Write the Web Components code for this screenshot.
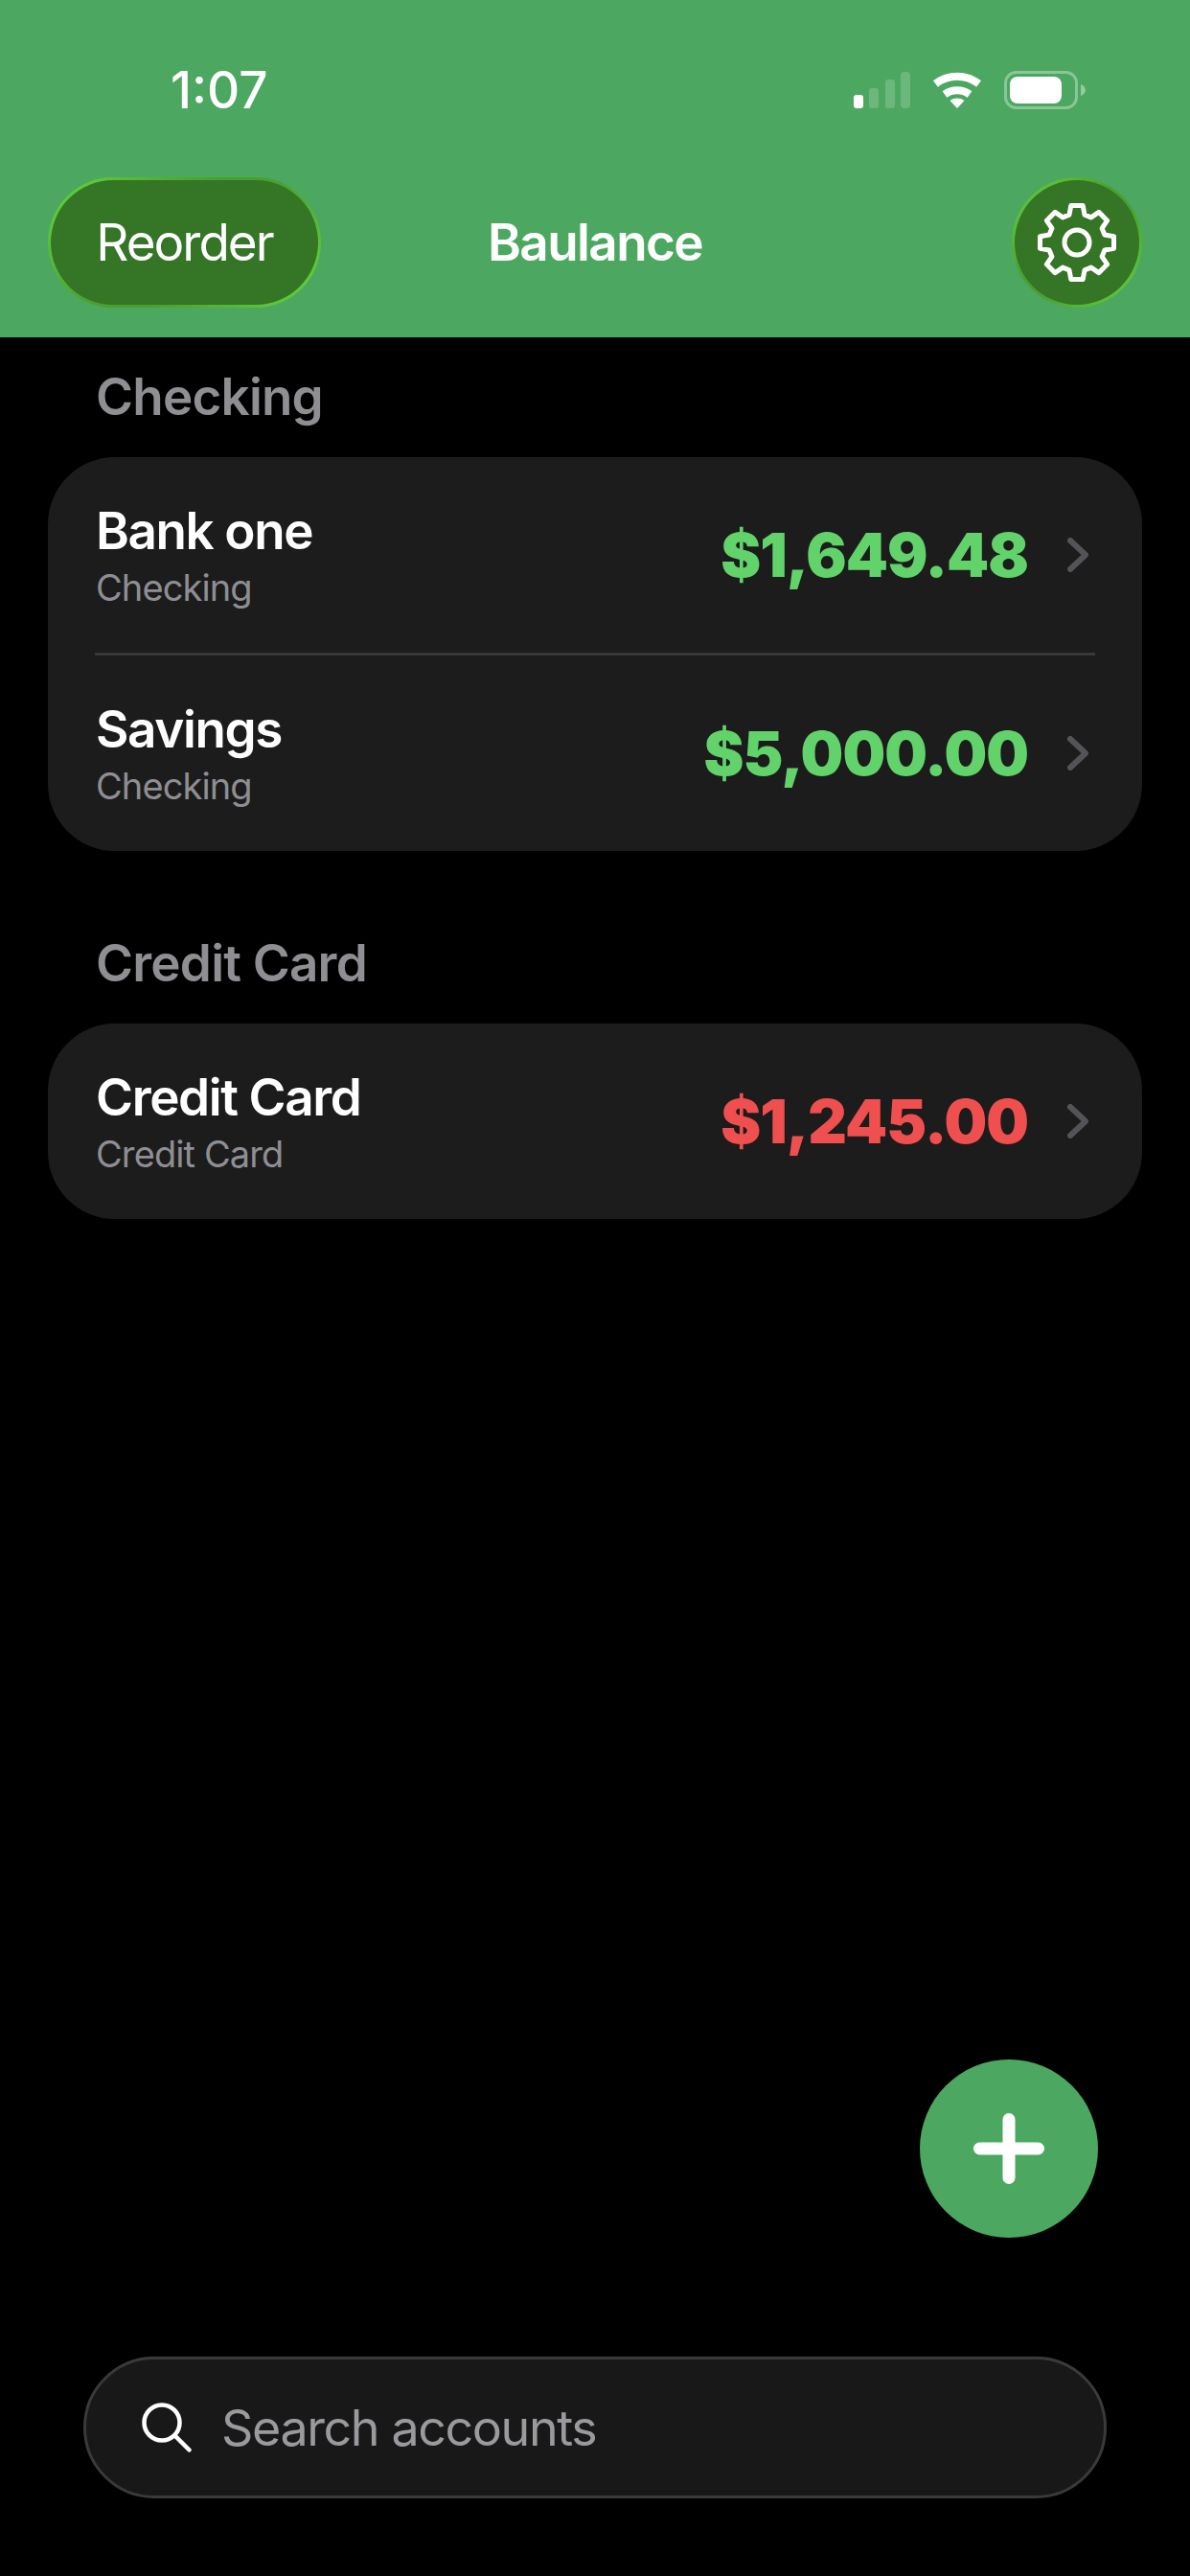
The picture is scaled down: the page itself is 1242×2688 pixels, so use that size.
<!DOCTYPE html>
<html lang="en">
<head>
<meta charset="UTF-8">
<title>Baulance</title>
<style>
  html, body { margin: 0; background: #000; }
</style>
</head>
<body>

<app-shell>
  <nav-header slot="top" title="Baulance" time="1:07"></nav-header>

  <account-section label="Checking">
    <account-row name="Bank one" kind="Checking" amount="$1,649.48"></account-row>
    <account-row divider name="Savings" kind="Checking" amount="$5,000.00"></account-row>
  </account-section>

  <account-section label="Credit Card" class="next">
    <account-row name="Credit Card" kind="Credit Card" amount="$1,245.00" tone="debt"></account-row>
  </account-section>

  <add-button slot="bottom"></add-button>
  <search-pill slot="bottom" placeholder="Search accounts"></search-pill>
</app-shell>

<script>
  const FONT = `Inter, "Noto Sans", "Liberation Sans", sans-serif`;

  function gearPath(cx, cy, outer, root, teeth) {
    const step = Math.PI * 2 / teeth;
    const pts = [];
    for (let i = 0; i < teeth; i++) {
      const a = -Math.PI / 2 + i * step;
      [[root, -0.27], [outer, -0.16], [outer, 0.16], [root, 0.27]].forEach(([r, d]) => {
        pts.push((cx + r * Math.cos(a + d)).toFixed(2) + ' ' + (cy + r * Math.sin(a + d)).toFixed(2));
      });
    }
    return 'M' + pts.join('L') + 'Z';
  }

  class AppShell extends HTMLElement {
    constructor() {
      super();
      this.attachShadow({ mode: 'open' }).innerHTML = `
        <style>
          :host {
            display: flex;
            flex-direction: column;
            width: 1242px;
            height: 2688px;
            background: #000;
            color: #fff;
            font-family: ${FONT};
          }
          main { flex: 1; padding: 0 50px; }
          footer {
            display: flex;
            flex-direction: column;
            padding-bottom: 81px;
          }
        </style>
        <slot name="top"></slot>
        <main><slot></slot></main>
        <footer><slot name="bottom"></slot></footer>
      `;
    }
  }

  class NavHeader extends HTMLElement {
    constructor() {
      super();
      this.attachShadow({ mode: 'open' });
    }
    connectedCallback() {
      this.shadowRoot.innerHTML = `
        <style>
          :host {
            display: block;
            height: 352px;
            box-sizing: border-box;
            background: #4ca860;
            padding: 0 50px;
          }
          .status {
            height: 185px;
            display: flex;
            justify-content: space-between;
            box-sizing: border-box;
            padding: 74px 59px 0 128px;
          }
          .time {
            font-size: 53px;
            font-weight: 500;
            line-height: 40px;
          }
          .status svg { display: block; }
          .row {
            display: grid;
            grid-template-columns: 1fr auto 1fr;
            align-items: center;
            height: 136px;
          }
          .pill {
            box-sizing: border-box;
            height: 136px;
            display: flex;
            align-items: center;
            justify-content: center;
            border: 3px solid transparent;
            background:
              linear-gradient(#347526, #347526) padding-box,
              linear-gradient(135deg, #66d63c 0%, #48a02e 42%, #48a02e 58%, #66d63c 100%) border-box;
          }
          .reorder {
            width: 285px;
            border-radius: 68px;
            font-size: 53px;
            font-weight: 400;
            letter-spacing: -2px;
          }
          .gear { width: 136px; border-radius: 50%; justify-self: end; }
          .title { font-size: 53px; font-weight: 600; letter-spacing: -1.6px; }
        </style>
        <div class="status">
          <span class="time">${this.getAttribute('time')}</span>
          <svg width="242" height="40" viewBox="0 0 242 40">
            <rect x="0" y="25" width="10" height="14" rx="3" fill="#fff"/>
            <g fill="#fff" fill-opacity=".18">
              <rect x="16" y="18" width="10" height="21" rx="3"/>
              <rect x="33" y="9" width="10" height="30" rx="3"/>
              <rect x="49" y="1" width="10" height="38" rx="4"/>
            </g>
            <g fill="none" stroke="#fff" stroke-width="8">
              <path d="M85.5 13.5 A37 37 0 0 1 130.5 13.5"/>
              <path d="M95 24.5 A22 22 0 0 1 121 24.5"/>
            </g>
            <path d="M100.5 31 A13 13 0 0 1 115.5 31 L108 39Z" fill="#fff"/>
            <rect x="158.5" y="1.5" width="74" height="37" rx="11" fill="none" stroke="#fff" stroke-opacity=".35" stroke-width="3"/>
            <rect x="163" y="6" width="54" height="28" rx="8" fill="#fff"/>
            <path d="M237 14 C240 15 242 17.500 242 20 C242 22.500 240 25 237 26Z" fill="#fff" fill-opacity=".4"/>
          </svg>
        </div>
        <div class="row">
          <div class="pill reorder">Reorder</div>
          <div class="title">${this.getAttribute('title')}</div>
          <div class="pill gear">
            <svg width="90" height="90" viewBox="0 0 90 90">
              <path d="${gearPath(45, 45, 39, 30, 8)}" fill="none" stroke="#fff" stroke-width="5" stroke-linejoin="round"/>
              <circle cx="45" cy="45" r="13" fill="none" stroke="#fff" stroke-width="5"/>
            </svg>
          </div>
        </div>
      `;
    }
  }

  class AccountSection extends HTMLElement {
    constructor() {
      super();
      this.attachShadow({ mode: 'open' });
    }
    connectedCallback() {
      this.shadowRoot.innerHTML = `
        <style>
          :host { display: block; }
          :host(.next) { margin-top: 55px; }
          h2 {
            margin: 0;
            padding: 30px 50px 31px;
            font-size: 53px;
            line-height: 64px;
            font-weight: 600;
            letter-spacing: -0.8px;
            color: #8e8e93;
          }
          .card {
            background: #1c1c1c;
            border-radius: 70px;
            overflow: hidden;
          }
        </style>
        <h2>${this.getAttribute('label')}</h2>
        <div class="card"><slot></slot></div>
      `;
    }
  }

  class AccountRow extends HTMLElement {
    constructor() {
      super();
      this.attachShadow({ mode: 'open' });
    }
    connectedCallback() {
      const debt = this.getAttribute('tone') === 'debt';
      this.shadowRoot.innerHTML = `
        <style>
          :host { display: block; }
          .line { height: 3px; margin: 0 49px; background: #38383a; }
          .row {
            height: 204px;
            display: flex;
            align-items: center;
            padding: 0 56px 0 50px;
          }
          .text { flex: 1; }
          .name { font-size: 53px; line-height: 64px; margin-bottom: 4px; font-weight: 600; letter-spacing: -1.4px; }
          .kind { font-size: 38px; line-height: 46px; color: #8e8e93; letter-spacing: -0.9px; }
          .amount {
            font-size: 63px;
            font-weight: 900;
            letter-spacing: -1px;
            color: ${debt ? '#ef4f4f' : '#62d26a'};
            margin-right: 41px;
          }
          svg { display: block; }
        </style>
        ${this.hasAttribute('divider') ? '<div class="line"></div>' : ''}
        <div class="row">
          <div class="text">
            <div class="name">${this.getAttribute('name')}</div>
            <div class="kind">${this.getAttribute('kind')}</div>
          </div>
          <div class="amount">${this.getAttribute('amount')}</div>
          <svg width="22" height="36" viewBox="0 0 22 36">
            <path d="M3 3 L19 18 L3 33" fill="none" stroke="#545458" stroke-width="6" stroke-linecap="round" stroke-linejoin="round"/>
          </svg>
        </div>
      `;
    }
  }

  class AddButton extends HTMLElement {
    constructor() {
      super();
      this.attachShadow({ mode: 'open' }).innerHTML = `
        <style>
          :host {
            display: flex;
            align-self: flex-end;
            align-items: center;
            justify-content: center;
            width: 186px;
            height: 186px;
            margin: 0 96px 124px 0;
            border-radius: 50%;
            background: #4ca860;
          }
          svg { display: block; }
        </style>
        <svg width="74" height="74" viewBox="0 0 74 74">
          <path d="M37 6.500 V67.500 M6.500 37 H67.500" stroke="#fff" stroke-width="13" stroke-linecap="round"/>
        </svg>
      `;
    }
  }

  class SearchPill extends HTMLElement {
    constructor() {
      super();
      this.attachShadow({ mode: 'open' });
    }
    connectedCallback() {
      this.shadowRoot.innerHTML = `
        <style>
          :host {
            display: flex;
            align-items: center;
            gap: 31px;
            box-sizing: border-box;
            height: 148px;
            margin: 0 87px;
            padding-left: 58px;
            border: 3px solid #3a3a3c;
            border-radius: 74px;
            background: #181818;
          }
          svg { display: block; }
          span { font-size: 52px; color: #9a9a9e; letter-spacing: -1.4px; }
        </style>
        <svg width="52" height="52" viewBox="0 0 52 52" fill="none" stroke="#fff" stroke-width="4.500" stroke-linecap="round">
          <circle cx="21" cy="21" r="18.500"/>
          <path d="M34.500 34.500 L49.500 49.500"/>
        </svg>
        <span>${this.getAttribute('placeholder')}</span>
      `;
    }
  }

  customElements.define('app-shell', AppShell);
  customElements.define('nav-header', NavHeader);
  customElements.define('account-section', AccountSection);
  customElements.define('account-row', AccountRow);
  customElements.define('add-button', AddButton);
  customElements.define('search-pill', SearchPill);
</script>
</body>
</html>
